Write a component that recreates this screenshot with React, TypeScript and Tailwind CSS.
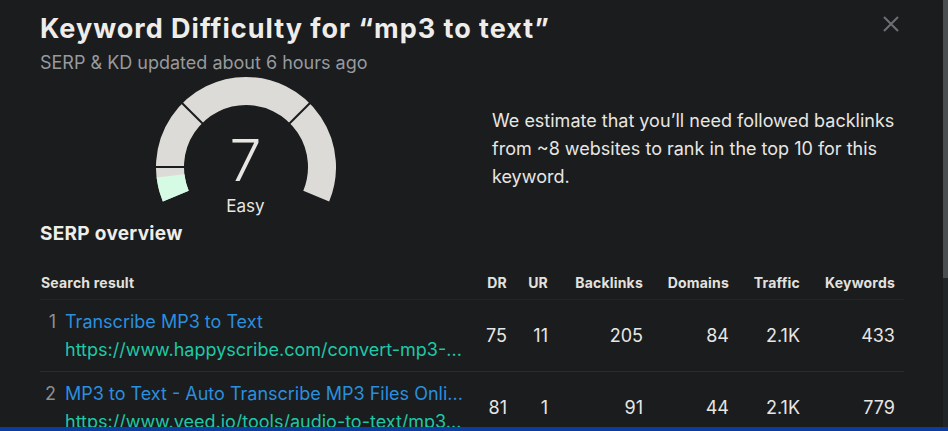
import React from 'react';

const CX = 90;
const CY = 90;

function pt(r: number, deg: number) {
  const a = (deg * Math.PI) / 180;
  return [CX + r * Math.cos(a), CY - r * Math.sin(a)];
}

function arc(r: number, from: number, to: number) {
  const [x1, y1] = pt(r, from);
  const [x2, y2] = pt(r, to);
  const large = from - to > 180 ? 1 : 0;
  return `M ${x1} ${y1} A ${r} ${r} 0 ${large} 1 ${x2} ${y2}`;
}

function Gauge({ value, label }: { value: number; label: string }) {
  const end = 202.5 - (value / 100) * 225;
  return (
    <div className="relative w-[180px] h-[136px]">
      <svg width="180" height="136" viewBox="0 0 180 136">
        <path d={arc(76, 202.5, -22.5)} fill="none" stroke="#dddbd7" strokeWidth={28} />
        <path d={arc(76, 202.5, end)} fill="none" stroke="#d5fbe5" strokeWidth={28} />
        {[180, 135, 45].map((deg) => {
          const [x1, y1] = pt(60, deg);
          const [x2, y2] = pt(92, deg);
          return <line key={deg} x1={x1} y1={y1} x2={x2} y2={y2} stroke="#1a1c1e" strokeWidth={2} />;
        })}
      </svg>
      <div className="absolute left-0 right-0 top-[52px] text-center text-[57px] leading-[64px] font-light text-[#e8e6e3]">
        {value}
      </div>
      <div className="absolute left-0 right-0 top-[118px] text-center text-[17px] leading-[22px] text-[#e8e6e3]">
        {label}
      </div>
    </div>
  );
}

const rows = [
  {
    n: 1,
    title: 'Transcribe MP3 to Text',
    url: 'https://www.happyscribe.com/convert-mp3-...',
    dr: 75,
    ur: 11,
    backlinks: '205',
    domains: '84',
    traffic: '2.1K',
    keywords: '433',
  },
  {
    n: 2,
    title: 'MP3 to Text - Auto Transcribe MP3 Files Onli...',
    url: 'https://www.veed.io/tools/audio-to-text/mp3...',
    dr: 81,
    ur: 1,
    backlinks: '91',
    domains: '44',
    traffic: '2.1K',
    keywords: '779',
  },
];

const cols = 'grid grid-cols-[417px_50px_41px_95px_86px_71px_95px] pr-[9px]';

export default function App() {
  return (
    <div
      className="relative w-[948px] h-[431px] overflow-hidden bg-[#1a1c1e] text-[#e8e6e3]"
      style={{ fontFamily: 'Inter, "Noto Sans", sans-serif' }}
    >
      {/* Header */}
      <div className="pl-[40px] pt-[13px]">
        <h1 className="text-[27px] leading-[32px] font-bold tracking-[1px] text-[#efedea]">
          Keyword Difficulty for “mp3 to text”
        </h1>
        <p className="mt-[6px] text-[18px] leading-[24px] text-[#979a9d]">
          SERP &amp; KD updated about 6 hours ago
        </p>
      </div>

      {/* close */}
      <button className="absolute left-[881px] top-[14px] w-[20px] h-[20px] flex items-center justify-center">
        <svg width="18" height="18" viewBox="0 0 18 18" fill="none" stroke="#6c6f73" strokeWidth={2}>
          <path d="M2 2l14 14M16 2L2 16" />
        </svg>
      </button>

      {/* KD summary */}
      <div className="flex items-center mt-[2px] pl-[40px]">
        <div className="w-[411px] flex justify-center">
          <Gauge value={7} label="Easy" />
        </div>
        <p className="ml-[41px] w-[420px] text-[18px] leading-[28px] text-[#e8e6e3] pt-[8px]">
          We estimate that you’ll need followed backlinks from ~8 websites to rank in the top 10 for this keyword.
        </p>
      </div>

      {/* SERP overview */}
      <div className="pl-[40px] w-[904px]">
        <h2 className="mt-[9px] text-[19px] leading-[24px] font-bold tracking-[0.3px] text-[#efedea]">SERP overview</h2>
        <div className="mt-[20px]">
          <div className={`${cols} h-[34px] items-center border-b border-[#232527] text-[14px] font-bold tracking-[0.2px] text-[#e3e1de]`}>
            <div className="pl-[1px]">Search result</div>
            <div className="text-right">DR</div>
            <div className="text-right">UR</div>
            <div className="text-right">Backlinks</div>
            <div className="text-right">Domains</div>
            <div className="text-right">Traffic</div>
            <div className="text-right">Keywords</div>
          </div>
          {rows.map((r) => (
            <div key={r.n} className={`${cols} h-[72px] items-center border-b border-[#2a2c2f] text-[18px]`}>
              <div className="flex min-w-0">
                <span className="w-[25px] shrink-0 pr-[9px] text-right text-[#8c8f92] leading-[28px]">{r.n}</span>
                <div className="flex flex-col whitespace-nowrap">
                  <span className="leading-[28px] text-[#2a8fdf]">{r.title}</span>
                  <span className="leading-[28px] text-[#1fc8a6]">{r.url}</span>
                </div>
              </div>
              <div className="text-right">{r.dr}</div>
              <div className="text-right">{r.ur}</div>
              <div className="text-right">{r.backlinks}</div>
              <div className="text-right">{r.domains}</div>
              <div className="text-right">{r.traffic}</div>
              <div className="text-right">{r.keywords}</div>
            </div>
          ))}
        </div>
      </div>

      {/* scrollbar */}
      <div className="absolute right-0 top-0 w-[5px] h-full bg-[#222527]">
        <div className="h-[278px] bg-[#4b4e51]" />
      </div>

      {/* bottom bar */}
      <div className="absolute left-0 bottom-0 w-full h-[4px] bg-[#0b3c9e]" />
    </div>
  );
}
